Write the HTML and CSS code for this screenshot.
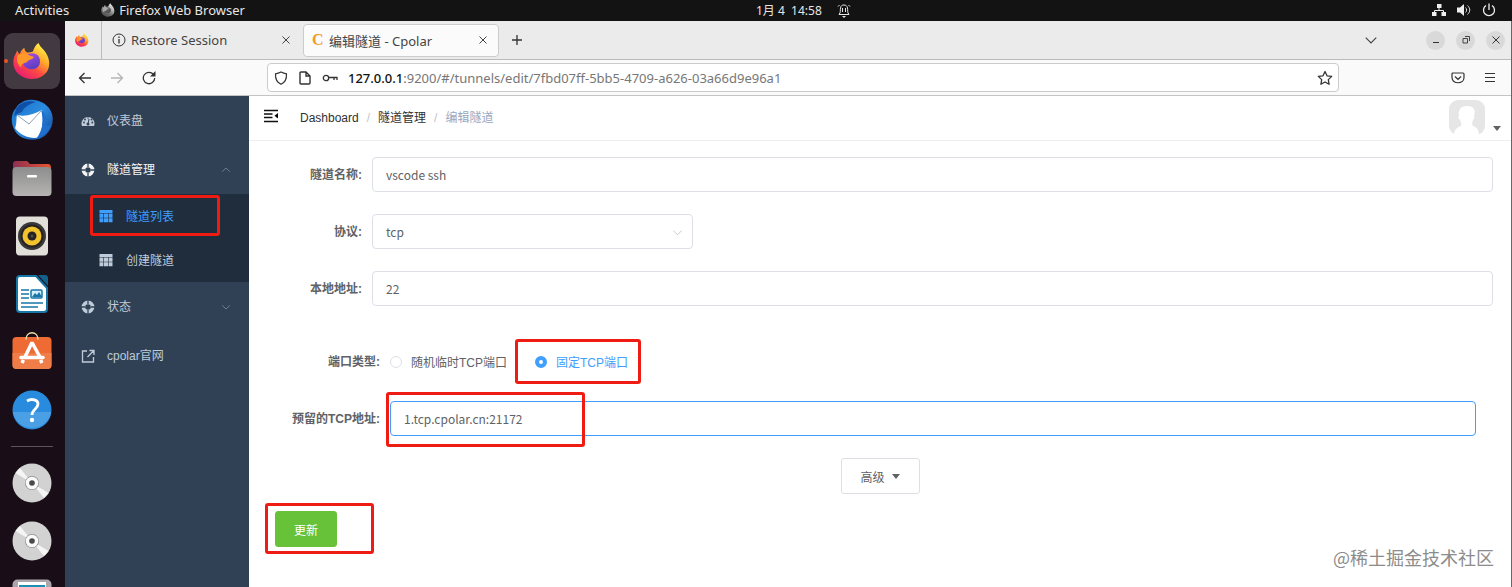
FILE: index.html
```html
<!DOCTYPE html>
<html lang="zh-CN">
<head>
    <meta charset="UTF-8">
    <meta name="viewport" content="width=device-width, initial-scale=1.0">
    <title>编辑隧道 - Cpolar</title>
    <link rel="stylesheet" href="styles.css">
</head>
<body>

<!-- Shared icons -->
<svg class="defs" width="0" height="0" aria-hidden="true">
    <defs>
        <linearGradient id="foxBody" x1="0.85" y1="0.1" x2="0.25" y2="0.95">
            <stop offset="0" stop-color="#fff14a"/>
            <stop offset="0.35" stop-color="#ffa52a"/>
            <stop offset="0.65" stop-color="#ff4a42"/>
            <stop offset="1" stop-color="#e91e72"/>
        </linearGradient>
        <linearGradient id="foxGlobe" x1="0" y1="0" x2="0.4" y2="1">
            <stop offset="0" stop-color="#b04ce0"/>
            <stop offset="1" stop-color="#5b3fc4"/>
        </linearGradient>
        <linearGradient id="bird" x1="0" y1="0" x2="1" y2="1">
            <stop offset="0" stop-color="#1d6fc4"/>
            <stop offset="0.5" stop-color="#2a8de0"/>
            <stop offset="1" stop-color="#143f96"/>
        </linearGradient>
        <linearGradient id="folderBack" x1="0" y1="0" x2="1" y2="0">
            <stop offset="0" stop-color="#8c2f55"/>
            <stop offset="1" stop-color="#e9552b"/>
        </linearGradient>
        <linearGradient id="folderFront" x1="0" y1="0" x2="0" y2="1">
            <stop offset="0" stop-color="#8d8d8d"/>
            <stop offset="1" stop-color="#b5b4b3"/>
        </linearGradient>
    </defs>
    <symbol id="firefox" viewBox="0 0 40 40">
        <path fill="url(#foxBody)" d="M4 9c1 1 2 3 3 4 1-3 2-5 5-7 0 3 1 4 3 5 2 0 4 0 6-1 1-4 3-7 6-9 1 4 5 6 8 11 5 8 4 18-3 23-8 6-19 5-26-1C0 29-1 20 2 14c1-2 2-3 2-5z"/>
        <path fill="url(#foxGlobe)" d="M13 15c3-4 10-4 13-1 4 5 3 11-2 14-5 2-11 0-13-4-1-3 0-6 2-9z"/>
        <path fill="#ff9a2a" d="M5 14c4-3 9-3 12 0 2 1 4 1 5 2-1 2-3 2-5 3-2 1-2 3-5 3-3 1-4 3-3 5-4-3-6-8-4-13z"/>
    </symbol>
    <symbol id="disc" viewBox="0 0 40 40">
        <circle cx="20" cy="20" r="19.5" fill="#d2d2d2"/>
        <path fill="#f5f5f5" d="M20 20 3.500 10 8 5zM20 20 36.500 30 32 35z"/>
        <circle cx="20" cy="20" r="7" fill="#8d8d8d"/>
        <circle cx="20" cy="20" r="6.300" fill="#fafafa"/>
        <circle cx="20" cy="20" r="2.800" fill="#4a4a4a"/>
    </symbol>
    <symbol id="ring" viewBox="0 0 14 14">
        <circle cx="7" cy="7" r="4.600" fill="none" stroke="currentColor" stroke-width="3.600"/>
        <path stroke="#304156" stroke-width="1.300" d="M7 0v4M7 10v4M0 7h4M10 7h4"/>
    </symbol>
    <symbol id="grid" viewBox="0 0 14 14">
        <path fill="currentColor" d="M.5 1h13v3H.5zM.5 4.600h3.900v8.700H.5zM5 4.600h4v8.700H5zM9.600 4.600h3.900v8.700H9.600z"/>
        <path stroke="#1f2d3d" stroke-width="0.500" d="M0 9h14"/>
    </symbol>
    <symbol id="cross" viewBox="0 0 10 10">
        <path fill="none" stroke="currentColor" d="m1.500 1.500 7 7m0-7-7 7"/>
    </symbol>
    <symbol id="chevron" viewBox="0 0 12 12">
        <path fill="none" stroke="currentColor" d="m1.500 4 4.500 4.500L10.500 4"/>
    </symbol>
</svg>

<header class="topbar">
    <div class="topbar-left">
        <span>Activities</span>
        <span class="topbar-app">
            <svg class="gray" width="14" height="14"><use href="#firefox"/></svg>
            Firefox Web Browser
        </span>
    </div>
    <div class="clock">
        <span>1月 4&nbsp; 14:58</span>
        <svg width="14" height="16" viewBox="0 0 14 16" fill="none" stroke="#e6e6e6"><path d="M2 11.500c2-2 1-4 1.500-6.500S5 2 7 2s3 1 3.500 3-.5 4.500 1.500 6.500zM5.500 5v4M8.500 5v4M1 3.500 2.500 2M13 3.500 11.500 2"/><path fill="#e6e6e6" stroke="none" d="M5 13h4l-2 2z"/></svg>
    </div>
    <div class="tray">
        <svg width="14" height="14" viewBox="0 0 14 14" fill="#eee"><path d="M5 1h4.500v4H5zM0 9h4.500v4H0zM9.500 9H14v4H9.500z"/><path fill="none" stroke="#eee" d="M7 5v2.500M2.500 9V7.500h9V9"/></svg>
        <svg width="14" height="14" viewBox="0 0 14 14" fill="#eee"><path d="M0 4.500h3L7 1v12L3 9.500H0z"/><path fill="none" stroke="#ddd" d="M8.500 4.500c1.500 1.500 1.500 3.500 0 5M10.500 2.500c3 3 3 6 0 9"/></svg>
        <svg width="14" height="14" viewBox="0 0 14 14" fill="none" stroke="#eee" stroke-width="1.300"><path d="M4 2.500a5.500 5.500 0 1 0 6 0M7 .5V7"/></svg>
    </div>
</header>

<div class="desktop">
    <!-- Launcher -->
    <nav class="dock">
        <div class="dock-item active"><svg width="38" height="38"><use href="#firefox"/></svg></div>
        <div class="dock-item">
            <svg width="42" height="42" viewBox="0 0 42 42">
                <path fill="url(#bird)" d="M13 2C24-2 38 4 41 15c3 12-4 22-13 25-9 2-19 0-24-8C-1 24 0 14 5 9c2-4 5-5 8-7z"/>
                <path fill="#0f4fa8" d="M5 10C9 3 18 1 25 3c-7 2-12 5-14 10-3 1-6 2-8 5z"/>
                <path fill="#fff" d="M6 16c9 2 17-1 25-5 1 7 1 15-1 22-1 4-3 6-6 6-8 0-16-4-20-10 2-4 1-9 2-13z"/>
                <path fill="none" stroke="#8aa3bb" d="m6 16 12 9 12-13"/>
                <path fill="#1e70cc" d="M30 11c3 9 2 21-5 29 8-2 13-8 15-14-3 1-5 1-6-1 3-4 1-10-4-14z"/>
            </svg>
        </div>
        <div class="dock-item">
            <svg width="40" height="38" viewBox="0 0 40 38">
                <path fill="url(#folderBack)" d="M1 5q0-3 3-3h11l3 3h18q3 0 3 4v8H1z"/>
                <rect x="0.500" y="8" width="39" height="29" rx="4" fill="url(#folderFront)"/>
                <rect x="15" y="16" width="10" height="2.500" rx="1" fill="#fff"/>
            </svg>
        </div>
        <div class="dock-item">
            <svg width="34" height="40" viewBox="0 0 34 40">
                <rect x="1" y="0.500" width="32" height="39" rx="4" fill="#e2dfdb"/>
                <circle cx="17" cy="20" r="14" fill="#3a3838"/>
                <circle cx="17" cy="20" r="11.500" fill="#242222"/>
                <circle cx="17" cy="20" r="9.500" fill="#f3c32c"/>
                <circle cx="17" cy="20" r="4.500" fill="#242222"/>
                <circle cx="17" cy="20" r="1.500" fill="#4e4c4c"/>
            </svg>
        </div>
        <div class="dock-item">
            <svg width="34" height="40" viewBox="0 0 34 40">
                <path fill="#fff" stroke="#1676a8" stroke-width="2" d="M5 2h16l11 12v21q0 3-3 3H5q-3 0-3-3V5q0-3 3-3z"/>
                <path fill="#12618c" d="M23 1h7q3 0 3 3v8z"/>
                <path fill="none" stroke="#1676a8" stroke-width="1.500" d="M6 16h8M6 20h8M6 24h8M6 29h22M6 33h17"/>
                <rect x="16" y="16" width="11" height="8" rx="1" fill="#d3eefb" stroke="#1676a8" stroke-width="1.500"/>
                <path fill="#1676a8" d="m17 23 3-4 2 2 2-3 3 5z"/>
            </svg>
        </div>
        <div class="dock-item">
            <svg width="40" height="40" viewBox="0 0 40 40">
                <rect x="0.500" y="5" width="39" height="32" rx="4" fill="#ee6c33"/>
                <path fill="#f07c48" d="M.5 21h39v12q0 4-4 4h-31q-4 0-4-4z"/>
                <path fill="none" stroke="#f3d9a6" stroke-width="1.500" d="M14 7.500c0-9 12-9 12 0"/>
                <path fill="none" stroke="#fff" stroke-width="3.500" d="m12.500 26 7-14.500h1l8 14.500M10 31l1.500-3M30 31l-1.500-3"/>
                <path stroke="#fff" stroke-width="3.500" stroke-linecap="round" d="M9 25.500h22"/>
            </svg>
        </div>
        <div class="dock-item">
            <svg width="40" height="40" viewBox="0 0 40 40">
                <circle cx="20" cy="20" r="19.500" fill="#298bdd"/>
                <path fill="#4a9fe5" d="M.8 22h38.400a19.500 19.500 0 0 1-38.400 0z"/>
                <path fill="none" stroke="#fff" stroke-width="2.800" d="M15 11c5-3 11-1 11 3 0 5-6 5-6 11"/>
                <circle cx="20" cy="30" r="2.200" fill="#fff"/>
            </svg>
        </div>
        <div class="dock-divider"></div>
        <div class="dock-item"><svg width="40" height="40"><use href="#disc"/></svg></div>
        <div class="dock-item"><svg width="40" height="40"><use href="#disc"/></svg></div>
        <div class="dock-item">
            <svg width="40" height="40" viewBox="0 0 40 40">
                <rect x="0.500" y="0.500" width="39" height="39" rx="5" fill="#aba6ac"/>
                <rect x="6" y="3" width="28" height="30" fill="#fff"/>
                <rect x="7" y="6" width="26" height="24" fill="#1c8fb5"/>
            </svg>
        </div>
    </nav>

    <div class="browser">
        <div class="tabs">
            <div class="tab pinned"><svg width="14" height="14"><use href="#firefox"/></svg></div>
            <div class="tab">
                <svg width="14" height="14" viewBox="0 0 14 14" fill="none" stroke="#333"><circle cx="7" cy="7" r="6"/><path stroke-width="1.300" d="M7 6v4.500M7 3.500V5"/></svg>
                <span class="tab-title">Restore Session</span>
                <button class="icon-btn" aria-label="Close tab"><svg width="10" height="10"><use href="#cross"/></svg></button>
            </div>
            <div class="tab current">
                <span class="favicon">C</span>
                <span class="tab-title">编辑隧道 - Cpolar</span>
                <button class="icon-btn" aria-label="Close tab"><svg width="10" height="10"><use href="#cross"/></svg></button>
            </div>
            <button class="icon-btn new-tab" aria-label="New tab"><svg width="12" height="12" viewBox="0 0 12 12" stroke="#333" stroke-width="1.300"><path d="M6 1v10M1 6h10"/></svg></button>
            <button class="icon-btn all-tabs" aria-label="List tabs"><svg width="14" height="14"><use href="#chevron"/></svg></button>
            <div class="window-btns">
                <button aria-label="Minimize"><svg width="10" height="10" viewBox="0 0 10 10" stroke="#333"><path d="M2 7.500h6"/></svg></button>
                <button aria-label="Restore"><svg width="10" height="10" viewBox="0 0 10 10" fill="none" stroke="#444"><path d="M2 3.500h4.500V8H2zM4 1.500h4.500V6"/></svg></button>
                <button aria-label="Close"><svg width="10" height="10"><use href="#cross"/></svg></button>
            </div>
        </div>

        <div class="navbar">
            <div class="nav-btns">
                <button class="icon-btn" aria-label="Back"><svg width="14" height="14" viewBox="0 0 14 14" fill="none" stroke="#333" stroke-width="1.300"><path d="M13 7H1.500M6.500 2l-5 5 5 5"/></svg></button>
                <button class="icon-btn" aria-label="Forward"><svg width="14" height="14" viewBox="0 0 14 14" fill="none" stroke="#b5b5b5" stroke-width="1.300"><path d="M1 7h11.500M7.500 2l5 5-5 5"/></svg></button>
                <button class="icon-btn" aria-label="Reload"><svg width="14" height="14" viewBox="0 0 14 14" fill="none" stroke="#333" stroke-width="1.300"><path d="M11.500 3.500A5.700 5.700 0 1 0 12.700 7"/><path fill="#333" stroke="none" d="M13.500 0v5.500H8z"/></svg></button>
            </div>
            <div class="urlbar">
                <svg width="14" height="14" viewBox="0 0 14 14" fill="none" stroke="#333" stroke-width="1.200"><path d="M7 1c2 1 3.500 1.500 5.500 1.800C12.800 8 11 11.500 7 13.300 3 11.500 1.200 8 1.500 2.800 3.500 2.500 5 2 7 1z"/></svg>
                <svg width="14" height="14" viewBox="0 0 14 14" fill="none" stroke="#333" stroke-width="1.400"><path d="M2 2q0-1 1-1h5l4 4v7q0 1-1 1H3q-1 0-1-1zM8 1v4h4"/></svg>
                <svg width="16" height="14" viewBox="0 0 16 14" fill="none" stroke="#333" stroke-width="1.300"><circle cx="4" cy="7" r="2.700"/><path d="M6.700 6.500H15V9M12 6.500V9"/></svg>
                <span class="url"><b>127.0.0.1</b>:9200/#/tunnels/edit/7fbd07ff-5bb5-4709-a626-03a66d9e96a1</span>
                <svg width="16" height="16" viewBox="0 0 16 16" fill="none" stroke="#333" stroke-width="1.300" stroke-linejoin="round"><path d="m8 1.500 2 4.300 4.700.6-3.400 3.200.8 4.700L8 12l-4.100 2.300.8-4.700L1.300 6.400 6 5.800z"/></svg>
            </div>
            <div class="nav-tools">
                <button class="icon-btn" aria-label="Pocket"><svg width="14" height="14" viewBox="0 0 14 14" fill="none" stroke="#333" stroke-width="1.200"><path d="M2 2h10q1 0 1 1v3.500c0 7-12 7-12 0V3q0-1 1-1zM4 5.500l3 3 3-3"/></svg></button>
                <button class="icon-btn" aria-label="Menu"><svg width="12" height="12" viewBox="0 0 12 12" stroke="#333"><path d="M1 1.500h10M1 5.500h10M1 9.500h10"/></svg></button>
            </div>
        </div>

        <div class="page">
            <aside class="sidebar">
                <a class="menu-item" href="#">
                    <svg width="14" height="14" viewBox="0 0 14 14"><path fill="currentColor" d="M1 12a6.500 6.500 0 1 1 12 0z"/><path fill="none" stroke="#304156" d="m7 10 1-5"/><g fill="#304156"><circle cx="7" cy="10" r="1.500"/><circle cx="3" cy="8.500" r=".9"/><circle cx="4" cy="5.500" r=".9"/><circle cx="7" cy="4" r=".7"/><circle cx="10.500" cy="5.500" r=".9"/><circle cx="11.300" cy="8.500" r=".9"/></g></svg>
                    <span>仪表盘</span>
                </a>
                <a class="menu-item open" href="#">
                    <svg width="14" height="14"><use href="#ring"/></svg>
                    <span>隧道管理</span>
                    <svg class="arrow up" width="10" height="10"><use href="#chevron"/></svg>
                </a>
                <div class="submenu">
                    <a class="submenu-item selected" href="#">
                        <svg width="14" height="14"><use href="#grid"/></svg>
                        <span>隧道列表</span>
                        <i class="mark mark-menu"></i>
                    </a>
                    <a class="submenu-item" href="#">
                        <svg width="14" height="14"><use href="#grid"/></svg>
                        <span>创建隧道</span>
                    </a>
                </div>
                <a class="menu-item" href="#">
                    <svg width="14" height="14"><use href="#ring"/></svg>
                    <span>状态</span>
                    <svg class="arrow" width="10" height="10"><use href="#chevron"/></svg>
                </a>
                <a class="menu-item" href="#">
                    <svg width="14" height="14" viewBox="0 0 14 14" fill="none" stroke="currentColor" stroke-width="1.300"><path d="M6 2H1.500v11h11V8M8.500 1.500H13V6M13 1.500 6.500 8"/></svg>
                    <span>cpolar官网</span>
                </a>
            </aside>

            <main class="main">
                <div class="page-header">
                    <button class="icon-btn" aria-label="Toggle sidebar"><svg width="14" height="14" viewBox="0 0 14 14" stroke="#111" stroke-width="1.500"><path d="M0 1.500h14M0 5h8.500M0 8.500h8.500M0 12.500h14"/><path stroke="none" d="M14 4v5.500L10.500 6.800z"/></svg></button>
                    <nav class="breadcrumb">
                        <a href="#">Dashboard</a><span class="sep">/</span><a href="#">隧道管理</a><span class="sep">/</span><span class="here">编辑隧道</span>
                    </nav>
                    <div class="user">
                        <svg width="36" height="35" viewBox="0 0 36 35"><rect width="36" height="35" rx="9" fill="#e6e6e6"/><path fill="#fff" d="M11 9c2-4 12-4 14 0 1 3 1 4 0 7 1 1 0 3-1 4-1 3-1 5 0 6 3 1 6 3 6 9H5c0-6 4-8 7-9 1-1 0-4-1-6-2-1-2-3-1-4-1-3 0-5 1-7z"/></svg>
                        <i class="caret"></i>
                    </div>
                </div>

                <form class="form">
                    <div class="row">
                        <label for="name">隧道名称:</label>
                        <input type="text" id="name" value="vscode ssh">
                    </div>
                    <div class="row">
                        <label for="protocol">协议:</label>
                        <div class="select">
                            <select id="protocol"><option>tcp</option></select>
                            <svg width="11" height="11"><use href="#chevron"/></svg>
                        </div>
                    </div>
                    <div class="row">
                        <label for="addr">本地地址:</label>
                        <input type="text" id="addr" value="22">
                    </div>

                    <div class="port">
                        <div class="row">
                            <span class="label">端口类型:</span>
                            <div class="radios">
                                <label class="radio"><input type="radio" name="port">随机临时TCP端口</label>
                                <label class="radio"><input type="radio" name="port" checked>固定TCP端口<i class="mark mark-radio"></i></label>
                            </div>
                        </div>
                        <div class="row">
                            <label for="reserved">预留的TCP地址:</label>
                            <div class="field">
                                <input type="text" id="reserved" class="focus" value="1.tcp.cpolar.cn:21172">
                                <i class="mark mark-field"></i>
                            </div>
                        </div>
                    </div>

                    <div class="more">
                        <button type="button" class="btn btn-more">高级<i class="caret"></i></button>
                    </div>
                    <button type="button" class="btn btn-save">更新<i class="mark mark-save"></i></button>
                </form>
                <div class="watermark">@稀土掘金技术社区</div>
            </main>
        </div>
    </div>
</div>

</body>
</html>
```

FILE: styles.css
```css
* {
    box-sizing: border-box;
}
body {
    margin: 0;
    height: 100vh;
    display: flex;
    flex-direction: column;
    overflow: hidden;
    font-family: "Liberation Sans", "Noto Sans CJK SC", sans-serif;
    font-size: 12px;
    color: #606266;
}
a {
    color: inherit;
    text-decoration: none;
}
svg {
    flex-shrink: 0;
}
button, input, select {
    font: inherit;
    color: inherit;
}
.defs {
    position: absolute;
}
.icon-btn {
    display: flex;
    padding: 0;
    border: none;
    background: none;
    color: #444;
}

/* Desktop bar */
.topbar {
    height: 21px;
    flex-shrink: 0;
    display: flex;
    align-items: center;
    background: #131313;
    color: #e6e6e6;
    font-family: "Noto Sans", "Noto Sans CJK SC", sans-serif;
    line-height: 18px;
    padding-bottom: 2px;
}
.topbar-left {
    width: 50%;
    display: flex;
    gap: 32px;
    padding-left: 15px;
    font-size: 13px;
}
.topbar-app {
    display: flex;
    align-items: center;
    gap: 4px;
}
.gray {
    filter: grayscale(1);
}
.clock {
    display: flex;
    align-items: center;
    gap: 15px;
    padding-top: 2px;
}
.tray {
    display: flex;
    gap: 11px;
    margin-left: auto;
    padding-right: 16px;
}
.desktop {
    flex: 1;
    min-height: 0;
    display: flex;
    background: #190e17;
}

/* Launcher */
.dock {
    width: 65px;
    flex-shrink: 0;
    padding: 11px 5px 0 4px;
    overflow: hidden;
}
.dock-item {
    height: 56px;
    margin-bottom: 2px;
    display: flex;
    align-items: center;
    justify-content: center;
}
.dock-item.active {
    position: relative;
    background: #433a41;
    border-radius: 9px;
    margin: 1px 0 3px;
}
.dock-item.active::before {
    content: "";
    position: absolute;
    left: 0;
    top: 26px;
    width: 4px;
    height: 4px;
    border-radius: 50%;
    background: #e95420;
}
.dock-divider {
    height: 1px;
    margin: 8px 7px;
    background: #5c5459;
}

/* Browser window */
.browser {
    flex: 1;
    min-width: 0;
    display: flex;
    flex-direction: column;
    background: #fff;
    border-right: 1px solid #666;
    font-family: "Noto Sans", "Noto Sans CJK SC", sans-serif;
}
.tabs {
    height: 39px;
    flex-shrink: 0;
    display: flex;
    align-items: center;
    background: #ebebeb;
    border-bottom: 1px solid #bbb;
    color: #444;
    font-size: 13px;
}
.tab {
    width: 201px;
    height: 33px;
    display: flex;
    align-items: center;
    gap: 5px;
    padding: 0 12px 0 10px;
}
.tab.pinned {
    width: 37px;
    height: 38px;
    padding: 0 10px;
    border-right: 1px solid #bbb;
}
.tab.current {
    width: 196px;
    padding: 0 10px 0 8px;
    background: #fbfbfb;
    border: 1px solid #ccc;
    border-radius: 4px;
}
.tab-title {
    flex: 1;
}
.favicon {
    width: 12px;
    font-family: "Liberation Serif", serif;
    font-size: 16px;
    font-weight: bold;
    color: #f39a2b;
}
.new-tab {
    margin-left: 12px;
}
.all-tabs {
    margin-left: auto;
}
.window-btns {
    display: flex;
    gap: 11px;
    padding: 0 6px 0 48px;
}
.window-btns button {
    width: 19px;
    height: 19px;
    display: flex;
    align-items: center;
    justify-content: center;
    padding: 0;
    border: none;
    border-radius: 50%;
    background: #d9d9d9;
    color: #333;
}
.navbar {
    height: 36px;
    flex-shrink: 0;
    display: flex;
    align-items: center;
    background: #fafafa;
    border-bottom: 1px solid #c4c4c4;
}
.nav-btns {
    width: 202px;
    display: flex;
    gap: 18px;
    padding-left: 13px;
}
.urlbar {
    flex: 1;
    height: 29px;
    display: flex;
    align-items: center;
    gap: 10px;
    padding: 0 5px 0 6px;
    background: #fff;
    border: 1px solid #ccc;
    border-radius: 4px;
}
.url {
    flex: 1;
    font-size: 13px;
    color: #777;
}
.url b {
    font-weight: 500;
    color: #111;
}
.nav-tools {
    width: 172px;
    display: flex;
    align-items: center;
    justify-content: flex-end;
    gap: 19px;
    padding-right: 15px;
}

/* Sidebar */
.page {
    flex: 1;
    min-height: 0;
    display: flex;
    font-family: "Liberation Sans", "Noto Sans CJK SC", sans-serif;
}
.sidebar {
    width: 184px;
    flex-shrink: 0;
    background: #304156;
    color: #bfcbd9;
}
.sidebar span {
    padding-bottom: 2px;
}
.menu-item {
    height: 49px;
    display: flex;
    align-items: center;
    gap: 12px;
    padding: 0 18px 0 16px;
}
.menu-item.open {
    color: #f4f4f5;
}
.arrow {
    margin-left: auto;
    color: #7e8a99;
}
.arrow.up {
    transform: rotate(180deg);
}
.submenu {
    background: #1f2d3d;
}
.submenu-item {
    position: relative;
    height: 44px;
    display: flex;
    align-items: center;
    gap: 13px;
    padding-left: 34px;
}
.submenu-item.selected {
    color: #409eff;
}

/* Content */
.main {
    position: relative;
    flex: 1;
    min-width: 0;
}
.page-header {
    height: 45px;
    display: flex;
    align-items: center;
    padding: 0 10px 4px 15px;
    border-bottom: 1px solid #eceef1;
}
.breadcrumb {
    display: flex;
    align-items: baseline;
    margin-left: 22px;
    color: #303133;
}
.sep {
    margin: 0 8px;
    color: #c0c4cc;
}
.here {
    color: #97a8be;
}
.user {
    display: flex;
    align-items: flex-end;
    gap: 8px;
    margin-left: auto;
    padding-top: 2px;
}
.user .caret {
    margin-bottom: 4px;
}
.caret {
    border: 4px solid transparent;
    border-top: 5px solid currentColor;
    border-bottom: none;
}
.form {
    display: flex;
    flex-direction: column;
    padding-top: 16px;
}
.row {
    display: flex;
    gap: 10px;
    margin: 0 18px 22px 0;
}
.row > label, .row > .label {
    width: 113px;
    flex-shrink: 0;
    line-height: 36px;
    height: 35px;
    text-align: right;
    font-weight: bold;
}
input[type="text"], select {
    width: 100%;
    height: 35px;
    padding: 0 13px;
    border: 1px solid #dcdfe6;
    border-radius: 4px;
    background: #fff;
    font-family: "Noto Sans CJK SC", sans-serif;
}
input.focus {
    border-color: #409eff;
}
.select {
    position: relative;
    width: 321px;
}
.select select {
    appearance: none;
}
.select svg {
    position: absolute;
    right: 10px;
    top: 13px;
    color: #c0c4cc;
}
.port {
    padding: 16px 17px 0 0;
}
.port .row > label, .port .row > .label {
    width: 131px;
}
.radios {
    display: flex;
    gap: 28px;
}
.radio {
    position: relative;
    display: flex;
    align-items: center;
    gap: 9px;
}
.radio:has(:checked) {
    color: #409eff;
}
.radio input {
    appearance: none;
    width: 12px;
    height: 12px;
    margin: 0;
    border: 1px solid #dcdfe6;
    border-radius: 50%;
}
.radio input:checked {
    border: 4px solid #409eff;
}
.field {
    position: relative;
    flex: 1;
}
.btn {
    height: 36px;
    border: 1px solid #dcdfe6;
    border-radius: 3px;
    background: #fff;
}
.more {
    display: flex;
    justify-content: center;
    margin-bottom: 17px;
}
.btn-more {
    width: 79px;
    display: flex;
    align-items: center;
    justify-content: center;
    gap: 7px;
}
.btn-save {
    position: relative;
    width: 62px;
    margin-left: 26px;
    background: #67c23a;
    border-color: #67c23a;
    color: #fff;
}

/* Red highlight boxes */
.mark {
    position: absolute;
    border: 3px solid #ee1c12;
    border-radius: 3px;
    pointer-events: none;
}
.mark-menu {
    left: 25px;
    top: 1px;
    width: 130px;
    height: 41px;
}
.mark-radio {
    left: -20px;
    right: -13px;
    top: -5px;
    height: 45px;
}
.mark-field {
    left: -4px;
    top: -9px;
    width: 199px;
    height: 55px;
}
.mark-save {
    left: -11px;
    top: -9px;
    width: 109px;
    height: 51px;
}
.watermark {
    position: absolute;
    right: 17px;
    bottom: 16px;
    font-family: "Noto Sans CJK SC", sans-serif;
    font-size: 18px;
    line-height: 28px;
    color: #8c8c8c;
}
```
